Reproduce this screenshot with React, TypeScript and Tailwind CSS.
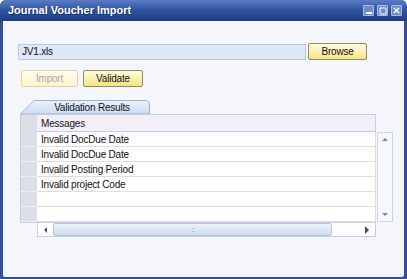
import { Square, X } from 'lucide-react';

const rows = ['Invalid DocDue Date', 'Invalid DocDue Date', 'Invalid Posting Period', 'Invalid project Code', '', ''];

export default function App() {
  return (
    <div className="w-[407px] h-[279px] flex flex-col bg-[#2f4f96] rounded-t-[6px] font-['Liberation_Sans',Arial,sans-serif] text-[10px] tracking-[-0.2px] text-[#111] overflow-hidden">
      {/* Title bar */}
      <div className="h-[21px] shrink-0 flex items-center justify-between pl-[8px] pr-[5px] bg-gradient-to-b from-[#5a7cc6] via-[#2f529f] to-[#1f3f88] rounded-t-[6px]">
        <span className="text-white font-bold text-[11px] tracking-normal [text-shadow:1px_1px_0_#1a2f66]">Journal Voucher Import</span>
        <div className="flex gap-[3px]">
          <div className="w-[11px] h-[11px] flex items-end justify-center pb-[1px] bg-[#6f8bcb] border border-[#a9bce4] rounded-[1px]">
            <div className="w-[6px] h-[2px] bg-white" />
          </div>
          <div className="w-[11px] h-[11px] flex items-center justify-center bg-[#6f8bcb] border border-[#a9bce4] rounded-[1px]">
            <Square size={8} strokeWidth={3} className="text-white" />
          </div>
          <div className="w-[11px] h-[11px] flex items-center justify-center bg-[#6f8bcb] border border-[#a9bce4] rounded-[1px]">
            <X size={9} strokeWidth={4} className="text-white" />
          </div>
        </div>
      </div>

      {/* Body */}
      <div className="flex-1 mx-[3px] mb-[2px] bg-[#f4f6fb] pt-[22px] pl-[15px] rounded-b-[2px]">
        {/* File input */}
        <div className="flex items-center gap-[2px]">
          <div className="w-[288px] h-[16px] bg-[#dfe8f7] border border-[#bcc8de] flex items-center pl-[3px]">JV1.xls</div>
          <button className="w-[59px] h-[17px] bg-gradient-to-b from-[#fffbe0] to-[#f7e47e] border border-[#8c8a70] rounded-[2px] flex items-center justify-center">Browse</button>
        </div>

        {/* Action buttons */}
        <div className="flex gap-[5px] mt-[10px] ml-[3px]">
          <button className="w-[57px] h-[17px] bg-gradient-to-b from-[#fffdf0] to-[#fbf3c8] border border-[#ddd5a8] rounded-[2px] text-[#a9a9a9] flex items-center justify-center">Import</button>
          <button className="w-[60px] h-[17px] bg-gradient-to-b from-[#fffbe0] to-[#f7e47e] border border-[#8c8a70] rounded-[2px] flex items-center justify-center">Validate</button>
        </div>

        {/* Tab */}
        <div className="relative w-[130px] h-[14px] mt-[13px] ml-[2px] flex items-center justify-center pl-[14px]">
          <svg className="absolute inset-0" width="130" height="14" viewBox="0 0 130 14">
            <defs>
              <linearGradient id="tabg" x1="0" y1="0" x2="0" y2="1">
                <stop offset="0" stopColor="#e8f0fb" />
                <stop offset="1" stopColor="#cfdcf1" />
              </linearGradient>
            </defs>
            <path d="M0.5 14 L14 0.5 L126 0.5 Q129.5 0.5 129.5 4 L129.5 14 Z" fill="url(#tabg)" stroke="#9fb2d4" />
          </svg>
          <span className="relative">Validation Results</span>
        </div>

        {/* Grid */}
        <div className="ml-[2px] w-[375px]">
          <div className="flex">
            <div className="flex flex-col">
              {/* header */}
              <div className="flex h-[18px] w-[356px] border-t border-[#c3cce0]">
                <div className="w-[17px] bg-[#dcdfe8] border-l border-[#c3cce0]" />
                <div className="flex-1 bg-[#f3eff8] border-b border-r border-[#c8cde0] flex items-center pl-[4px]">Messages</div>
              </div>
              {rows.map((r, i) => (
                <div key={i} className="flex h-[15px] w-[356px]">
                  <div className="w-[17px] bg-[#dcdfe8] border-l border-[#c3cce0] border-b border-b-[#eceef4]" />
                  <div className="flex-1 bg-white border-b border-r border-[#e2dfd2] flex items-center pl-[4px]">{r}</div>
                </div>
              ))}
            </div>
            {/* vertical scrollbar */}
            <div className="w-[16px] h-[90px] mt-[18px] ml-[1px] bg-[#f6f8fc] border border-[#cdd5e6] flex flex-col items-center justify-between py-[5px]">
              <div className="w-0 h-0 border-x-[3px] border-x-transparent border-b-[3px] border-b-[#7d8596]" />
              <div className="w-0 h-0 border-x-[3px] border-x-transparent border-t-[3px] border-t-[#7d8596]" />
            </div>
          </div>

          {/* horizontal scrollbar */}
          <div className="flex">
            <div className="w-[17px] h-[1px] bg-[#c3cce0]" />
            <div className="w-[339px] h-[15px] flex items-center bg-white border border-[#c6d0e4]">
              <div className="w-[15px] flex justify-center">
                <div className="w-0 h-0 border-y-[3px] border-y-transparent border-r-[3px] border-r-[#4a4f5a]" />
              </div>
              <div className="w-[279px] h-[13px] bg-gradient-to-b from-[#eef3fb] to-[#cfdbee] border border-[#b5c4df] rounded-[2px] flex items-center justify-center">
                <span className="text-[#9aa6bd] text-[7px] leading-none tracking-[-1px]">:::</span>
              </div>
              <div className="flex-1 flex justify-end pr-[6px]">
                <div className="w-0 h-0 border-y-[4px] border-y-transparent border-l-[4px] border-l-[#4a4f5a]" />
              </div>
            </div>
          </div>
        </div>
      </div>
    </div>
  );
}
